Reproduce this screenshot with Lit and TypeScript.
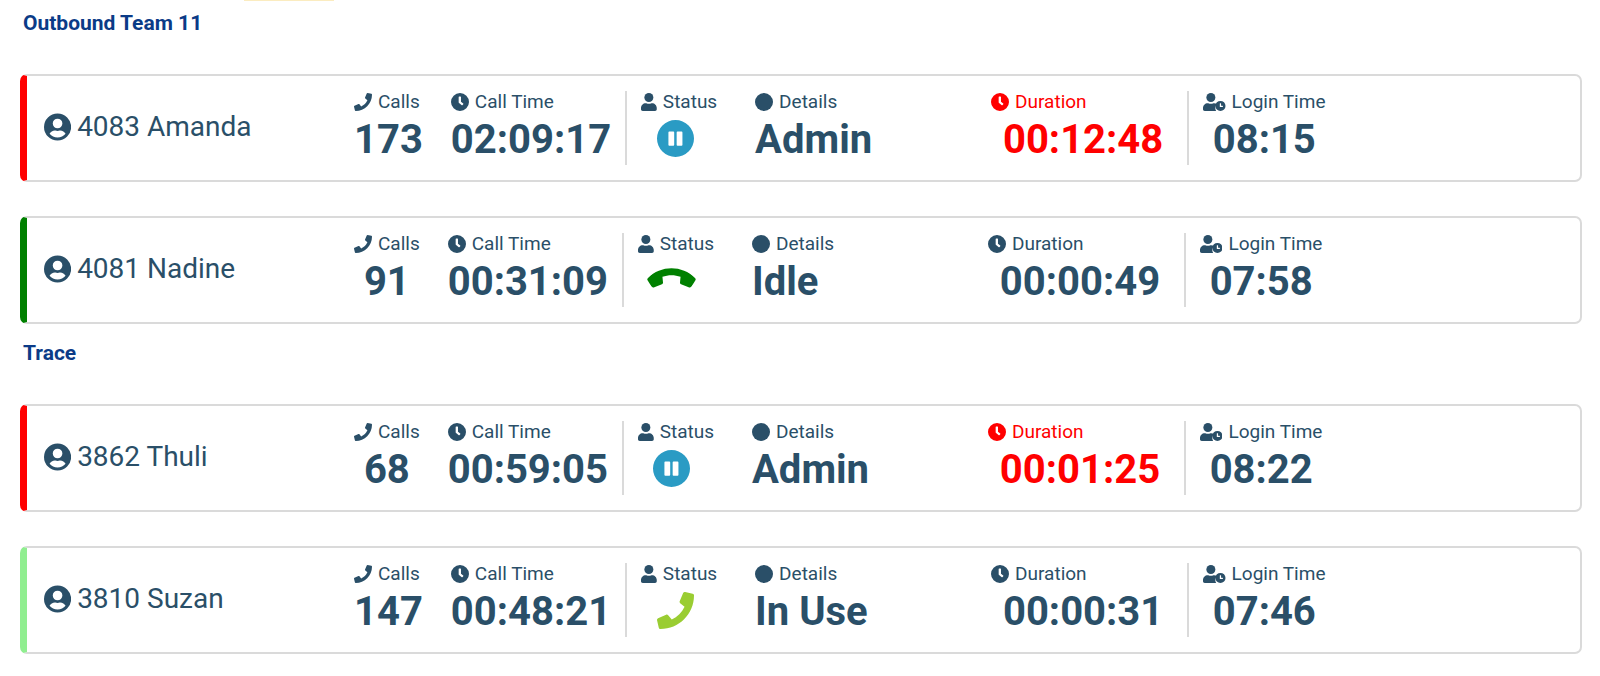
import { LitElement, html, css, svg } from "lit";
import { customElement, property } from "lit/decorators.js";
import { classMap } from "lit/directives/class-map.js";

type State = "paused" | "idle" | "active";

interface Agent {
  ext: string;
  name: string;
  calls: number;
  callTime: string;
  state: State;
  details: string;
  duration: string;
  login: string;
}

interface Team {
  name: string;
  agents: Agent[];
}

const TEAMS: Team[] = [
  {
    name: "Outbound Team 11",
    agents: [
      { ext: "4083", name: "Amanda", calls: 173, callTime: "02:09:17", state: "paused", details: "Admin", duration: "00:12:48", login: "08:15" },
      { ext: "4081", name: "Nadine", calls: 91, callTime: "00:31:09", state: "idle", details: "Idle", duration: "00:00:49", login: "07:58" },
    ],
  },
  {
    name: "Trace",
    agents: [
      { ext: "3862", name: "Thuli", calls: 68, callTime: "00:59:05", state: "paused", details: "Admin", duration: "00:01:25", login: "08:22" },
      { ext: "3810", name: "Suzan", calls: 147, callTime: "00:48:21", state: "active", details: "In Use", duration: "00:00:31", login: "07:46" },
    ],
  },
];

const shapes = {
  phone: { box: "0 0 512 512", body: svg`<path d="M493.400 24.600l-104-24c-11.300-2.600-22.900 3.300-27.500 13.900l-48 112c-4.200 9.800-1.400 21.300 6.900 28l60.600 49.600c-36 76.700-98.900 140.500-177.200 177.200l-49.600-60.600c-6.800-8.300-18.200-11.100-28-6.900l-112 48C3.900 366.500-2 378.100.6 389.400l24 104C27.100 504.200 36.700 512 48 512c256.100 0 464-207.500 464-464 0-11.200-7.700-20.900-18.600-23.400z"/>` },
  clock: { box: "0 0 512 512", body: svg`<path fill-rule="evenodd" d="M256 0a256 256 0 1 0 0 512a256 256 0 1 0 0-512zM218 112q0-16 16-16h34q16 0 16 16v134l62 50q12 10 3 22l-20 24q-10 12-22 3l-77-58q-12-9-12-24z"/>` },
  user: { box: "0 0 448 512", body: svg`<circle cx="224" cy="128" r="128"/><path d="M314 288h-17a174 174 0 0 1-146 0h-17C60 288 0 348 0 422v42c0 26 22 48 48 48h352c26 0 48-22 48-48v-42c0-74-60-134-134-134z"/>` },
  dot: { box: "0 0 512 512", body: svg`<circle cx="256" cy="256" r="256"/>` },
  userClock: { box: "0 0 640 512", body: svg`<circle cx="224" cy="128" r="128"/><path d="M314 288h-17a174 174 0 0 1-146 0h-17C60 288 0 348 0 422v42c0 26 22 48 48 48h325a175 175 0 0 1 25-200c-24-15-53-24-84-24z"/><path fill-rule="evenodd" d="M496 224a144 144 0 1 0 0 288a144 144 0 1 0 0-288zM478 300q0-10 10-10h16q10 0 10 10v62h42q10 0 10 10v16q0 10-10 10h-68q-10 0-10-10z"/>` },
  userCircle: { box: "0 0 496 512", body: svg`<path fill-rule="evenodd" d="M248 8a248 248 0 1 0 0 496a248 248 0 1 0 0-496zM248 104a88 88 0 1 1 0 176a88 88 0 1 1 0-176zM248 448c-59 0-111-27-146-69 19-35 56-59 98-59 3 0 5 0 7 1a128 128 0 0 0 82 0c2-1 5-1 7-1 43 0 79 24 98 59-35 42-87 69-146 69z"/>` },
  pause: { box: "0 0 512 512", body: svg`<path fill-rule="evenodd" d="M256 0a256 256 0 1 0 0 512a256 256 0 1 0 0-512zM170 160h56q12 0 12 12v172q0 12-12 12h-56q-12 0-12-12v-172q0-12 12-12zM284 160h56q12 0 12 12v172q0 12-12 12h-56q-12 0-12-12v-172q0-12 12-12z"/>` },
};

type ShapeName = keyof typeof shapes;

@customElement("line-icon")
class LineIcon extends LitElement {
  @property() name: ShapeName = "dot";

  static styles = css`
    :host { display: inline-flex; }
    .glyph { display: block; height: 100%; width: auto; fill: currentColor; }
  `;

  render() {
    const s = shapes[this.name];
    return html`<svg class="glyph" viewBox=${s.box} aria-hidden="true">${s.body}</svg>`;
  }
}

@customElement("agent-card")
class AgentCard extends LitElement {
  @property({ attribute: false }) agent!: Agent;

  static styles = css`
    :host { display: block; }
    .card {
      box-sizing: border-box;
      display: flex;
      align-items: center;
      min-height: 108px;
      padding: 15px 16px 15px 17px;
      border: 2px solid #dadada;
      border-left: 7px solid red;
      border-radius: 7px;
      color: #2a4f68;
    }
    .idle { border-left-color: #008000; }
    .active { border-left-color: #90ee90; }
    .agent {
      display: flex;
      align-items: center;
      gap: 6px;
      flex: 0 0 310px;
      padding-bottom: 2px;
      font-size: 28px;
      line-height: 36px;
    }
    .avatar { height: 28px; }
    .stats { display: flex; align-items: stretch; margin: 0; }
    .stat { box-sizing: border-box; display: flex; flex-direction: column; gap: 2px; height: 74px; }
    .calls { margin-right: 28px; }
    .talk, .duration { border-right: 2px solid #dadada; }
    .talk { padding-right: 14px; }
    .status { width: 128px; padding-left: 14px; }
    .details { width: 236px; }
    .duration { width: 198px; }
    .login { padding-left: 14px; }
    .label {
      display: flex;
      align-items: center;
      gap: 6px;
      font-size: 19px;
      line-height: 22px;
      white-space: nowrap;
    }
    .small { height: 18px; }
    .value {
      margin: 0;
      font-size: 40px;
      line-height: 50px;
      font-weight: 700;
      text-align: center;
      white-space: nowrap;
    }
    .details .value { text-align: left; }
    .duration .value { padding-right: 12px; }
    .mark { display: flex; align-items: center; justify-content: center; width: 68px; height: 46px; margin: 0; }
    .state { height: 37px; color: #2a9bc4; }
    .idle .state { color: #008000; transform: rotate(-135deg); }
    .active .state { color: #9acd32; }
    .alert { color: red; }
  `;

  private stat(kind: string, icon: ShapeName, label: string, value: unknown, alert = false) {
    return html`
      <div class=${classMap({ stat: true, [kind]: true })}>
        <dt class=${classMap({ label: true, alert })}><line-icon class="small" name=${icon}></line-icon>${label}</dt>
        <dd class=${classMap({ value: true, alert })}>${value}</dd>
      </div>`;
  }

  render() {
    const a = this.agent;
    const paused = a.state === "paused";
    return html`
      <article class=${classMap({ card: true, [a.state]: true })}>
        <div class="agent"><line-icon class="avatar" name="userCircle"></line-icon>${a.ext} ${a.name}</div>
        <dl class="stats">
          ${this.stat("calls", "phone", "Calls", a.calls)}
          ${this.stat("talk", "clock", "Call Time", a.callTime)}
          <div class="stat status">
            <dt class="label"><line-icon class="small" name="user"></line-icon>Status</dt>
            <dd class="mark"><line-icon class="state" role="img" aria-label=${a.state} name=${paused ? "pause" : "phone"}></line-icon></dd>
          </div>
          ${this.stat("details", "dot", "Details", a.details)}
          ${this.stat("duration", "clock", "Duration", a.duration, paused)}
          ${this.stat("login", "userClock", "Login Time", a.login)}
        </dl>
      </article>`;
  }
}

@customElement("app-root")
class AppRoot extends LitElement {
  static styles = css`
    :host {
      display: block;
      font-family: Roboto, "Liberation Sans", sans-serif;
      background: #fff;
    }
    .strip { width: 90px; height: 1px; margin-left: 244px; background: #fbecc0; }
    .team { padding: 0 18px 0 20px; }
    .title {
      margin: 0;
      padding: 9px 3px 38px;
      font-size: 21px;
      line-height: 26px;
      font-weight: 700;
      color: #0b3b87;
    }
    .list { display: flex; flex-direction: column; gap: 34px; padding-bottom: 7px; }
  `;

  render() {
    return html`
      <div class="strip"></div>
      ${TEAMS.map(
        (t) => html`
          <section class="team">
            <h2 class="title">${t.name}</h2>
            <div class="list">${t.agents.map((a) => html`<agent-card .agent=${a}></agent-card>`)}</div>
          </section>`
      )}`;
  }
}
